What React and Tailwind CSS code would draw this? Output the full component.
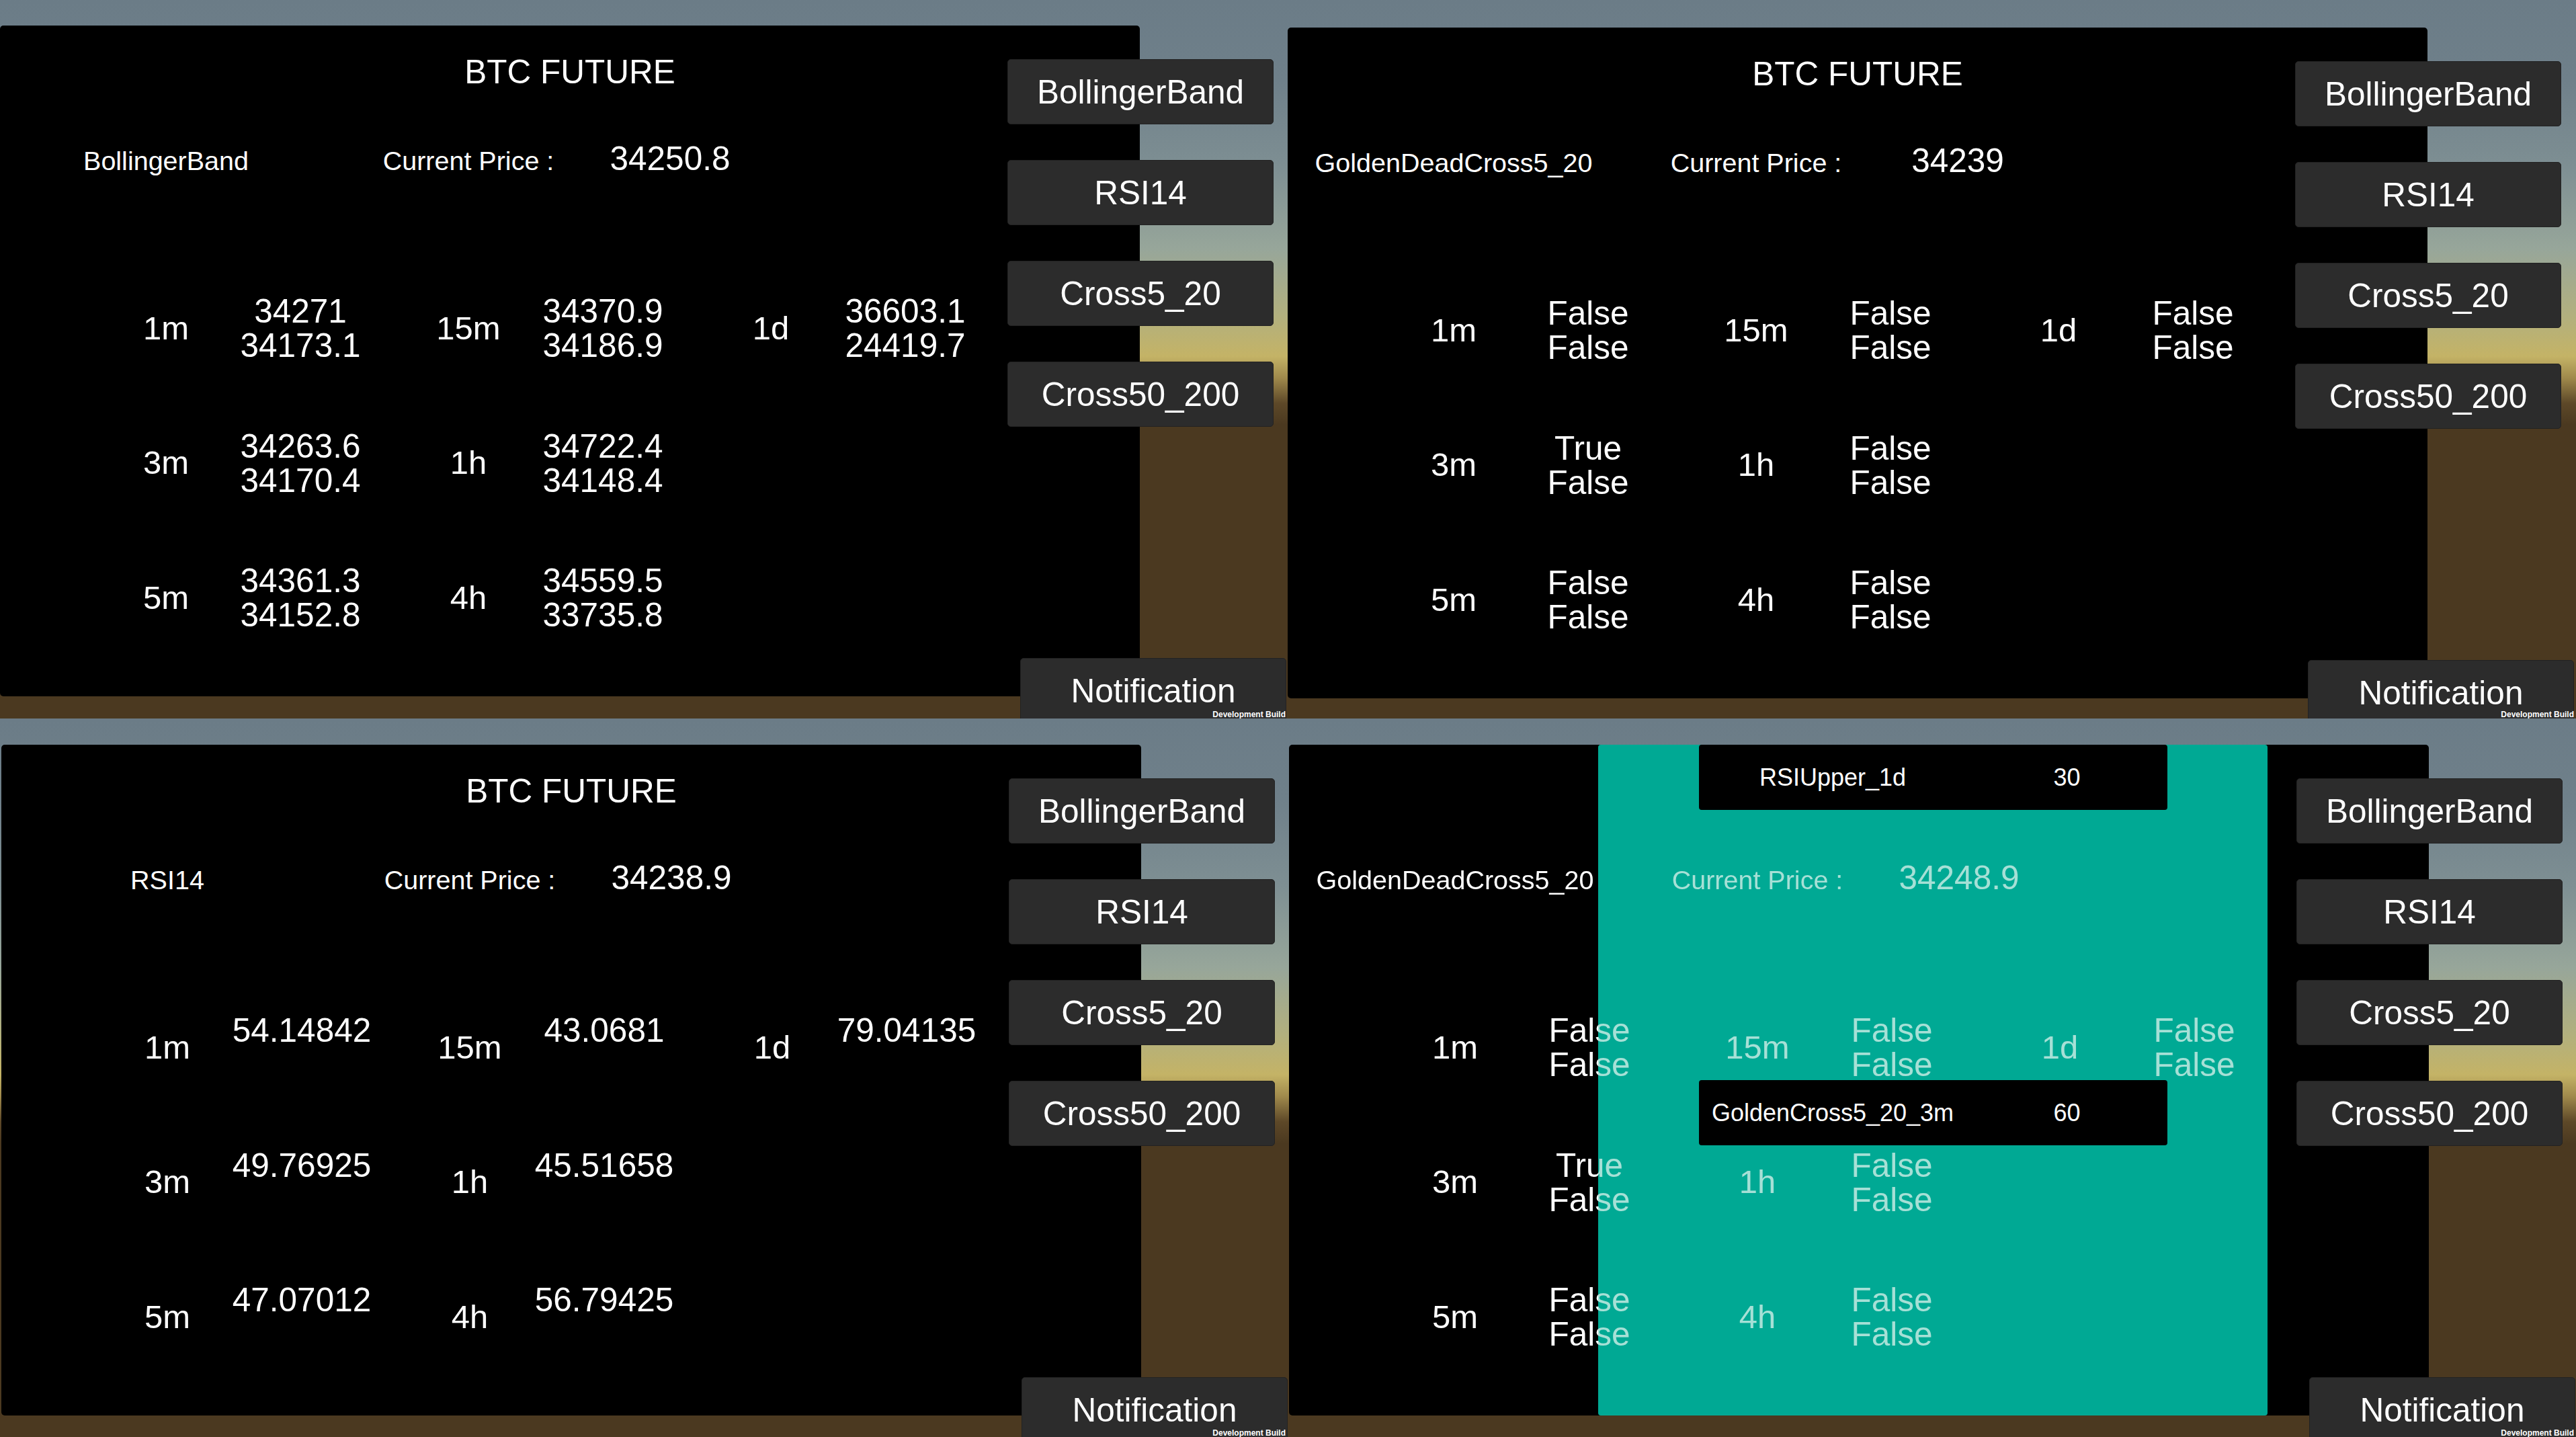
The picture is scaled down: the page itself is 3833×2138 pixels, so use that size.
import React from "react";

const FF = "[font-family:'Liberation_Sans',Arial,sans-serif]";

const SKY =
  "bg-[linear-gradient(180deg,#6b7c87_0px,#6f808a_120px,#7e8f93_250px,#97a69a_370px,#b2b07e_470px,#c4b366_530px,#a08a4c_562px,#5d4828_600px,#4b3920_632px,#4b3920_100%)]";

const FF2 = { a: ["False", "False"], t: ["True", "False"] };

const QUADS = [
  {
    key: "q1",
    shift: "",
    label: "BollingerBand",
    price: "34250.8",
    rows: [
      [["1m", ["34271", "34173.1"]], ["15m", ["34370.9", "34186.9"]], ["1d", ["36603.1", "24419.7"]]],
      [["3m", ["34263.6", "34170.4"]], ["1h", ["34722.4", "34148.4"]]],
      [["5m", ["34361.3", "34152.8"]], ["4h", ["34559.5", "33735.8"]]],
    ],
  },
  {
    key: "q2",
    shift: "translate-y-[3px]",
    label: "GoldenDeadCross5_20",
    price: "34239",
    rows: [
      [["1m", FF2.a], ["15m", FF2.a], ["1d", FF2.a]],
      [["3m", FF2.t], ["1h", FF2.a]],
      [["5m", FF2.a], ["4h", FF2.a]],
    ],
  },
  {
    key: "q3",
    shift: "translate-x-[2px] translate-y-[1px]",
    label: "RSI14",
    price: "34238.9",
    rows: [
      [["1m", ["54.14842"]], ["15m", ["43.0681"]], ["1d", ["79.04135"]]],
      [["3m", ["49.76925"]], ["1h", ["45.51658"]]],
      [["5m", ["47.07012"]], ["4h", ["56.79425"]]],
    ],
  },
  {
    key: "q4",
    shift: "translate-x-[2px] translate-y-[1px]",
    label: "GoldenDeadCross5_20",
    price: "34248.9",
    teal: true,
    rows: [
      [["1m", FF2.a], ["15m", FF2.a], ["1d", FF2.a]],
      [["3m", FF2.t], ["1h", FF2.a]],
      [["5m", FF2.a], ["4h", FF2.a]],
    ],
  },
];

function DataRow({ cells }) {
  return (
    <div className="grid h-[102px] grid-cols-[200px_200px_50px_200px_200px_50px_200px_200px] items-start">
      {cells.map(([tf, vals], i) => (
        <React.Fragment key={tf}>
          <div className="flex h-[102px] items-center justify-center whitespace-nowrap text-[49px] leading-[51px]">
            {tf}
          </div>
          <div className="flex flex-col items-center whitespace-nowrap text-[49.5px] leading-[51px]">
            {vals.map((v, j) => (
              <span key={j}>{v}</span>
            ))}
          </div>
          {i < 2 ? <div /> : null}
        </React.Fragment>
      ))}
    </div>
  );
}

function OverlayBox({ name, value, pos }) {
  return (
    <div
      className={`absolute left-[610px] w-[697px] h-[97px] rounded-[4px] bg-black grid grid-cols-[398px_299px] items-center text-[36px] leading-none text-white ${pos}`}
    >
      <div className="flex justify-center whitespace-nowrap">{name}</div>
      <div className="flex justify-center whitespace-nowrap">{value}</div>
    </div>
  );
}

function Panel({ q }) {
  return (
    <div className="relative isolate mt-[38px] flex h-[998px] w-[1696px] shrink-0 flex-col rounded-[5px] bg-black text-white">
      <div className="mt-[44px] flex justify-center whitespace-nowrap text-[49.5px] leading-none">BTC FUTURE</div>
      <div className="mt-[79px] grid grid-cols-[147px_200px_250px_200px_100px_200px] items-baseline">
        <div />
        <div className="flex justify-center whitespace-nowrap text-[39.5px] leading-none">{q.label}</div>
        <div />
        <div className="flex justify-center whitespace-nowrap text-[39.5px] leading-none">Current Price :</div>
        <div />
        <div className="flex justify-center whitespace-nowrap text-[49.5px] leading-none">{q.price}</div>
      </div>
      <div className="mt-[177px] flex flex-col gap-[98.5px] pl-[147px]">
        {q.rows.map((r, i) => (
          <DataRow key={i} cells={r} />
        ))}
      </div>
      {q.teal ? (
        <>
          <div className="absolute bottom-0 left-[460px] top-0 w-[996px] rounded-[4px] bg-[rgb(166,55,66)] mix-blend-multiply" />
          <div className="absolute bottom-0 left-[460px] top-0 w-[996px] rounded-[4px] bg-[rgb(0,169,148)] [mix-blend-mode:plus-lighter]" />
          <OverlayBox name="RSIUpper_1d" value="30" pos="top-0" />
          <OverlayBox name="GoldenCross5_20_3m" value="60" pos="top-[499px]" />
        </>
      ) : null}
    </div>
  );
}

function GameButton({ children, extra = "" }) {
  return (
    <div
      className={`flex h-[97px] w-[396px] items-center justify-center rounded-[5px] border border-[#222222] bg-[#2c2c2c] whitespace-nowrap text-[49.5px] leading-none text-white ${extra}`}
    >
      {children}
    </div>
  );
}

function Quadrant({ q }) {
  return (
    <div className={`relative overflow-hidden ${SKY}`}>
      <div className={`relative flex h-full flex-col ${q.shift}`}>
        <Panel q={q} />
        <div className="absolute left-[1499px] top-[88px] flex flex-col gap-[53px]">
          <GameButton>BollingerBand</GameButton>
          <GameButton>RSI14</GameButton>
          <GameButton>Cross5_20</GameButton>
          <GameButton>Cross50_200</GameButton>
        </div>
        <GameButton extra="absolute left-[1518px] top-[979px]">Notification</GameButton>
      </div>
      <div className="absolute bottom-0 right-[3px] whitespace-nowrap text-[12px] font-bold leading-none text-white">
        Development Build
      </div>
    </div>
  );
}

export default function App() {
  return (
    <div
      className={`grid h-[2138px] w-[3833px] grid-cols-[1916px_1917px] grid-rows-[1069px_1069px] overflow-hidden bg-[#4b3920] ${FF}`}
    >
      {QUADS.map((q) => (
        <Quadrant key={q.key} q={q} />
      ))}
    </div>
  );
}
